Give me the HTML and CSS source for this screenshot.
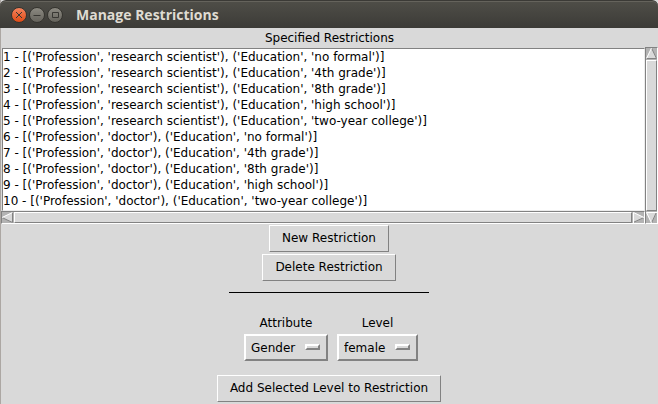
FILE: index.html
```html
<!DOCTYPE html>
<html lang="en">
<head>
<meta charset="utf-8">
<title>Manage Restrictions</title>
<link rel="stylesheet" href="styles.css">
</head>
<body>
<div class="window">
  <header class="titlebar">
    <div class="window-controls">
      <button class="control control-close" type="button" aria-label="Close"><svg viewBox="0 0 16 16"><path d="M5 5l6 6M11 5l-6 6"/></svg></button>
      <button class="control" type="button" aria-label="Minimize"><svg viewBox="0 0 16 16"><path d="M4.500 8.500h7"/></svg></button>
      <button class="control" type="button" aria-label="Maximize"><svg viewBox="0 0 16 16"><path d="M5.500 5.500h6v5h-6z"/></svg></button>
    </div>
    <h1 class="title">Manage Restrictions</h1>
  </header>
  <main class="content">
    <label class="list-label" for="restrictions">Specified Restrictions</label>
    <div class="list-area">
      <div class="list-column">
        <select class="listbox" id="restrictions" size="10">
          <option>1 - [('Profession', 'research scientist'), ('Education', 'no formal')]</option>
          <option>2 - [('Profession', 'research scientist'), ('Education', '4th grade')]</option>
          <option>3 - [('Profession', 'research scientist'), ('Education', '8th grade')]</option>
          <option>4 - [('Profession', 'research scientist'), ('Education', 'high school')]</option>
          <option>5 - [('Profession', 'research scientist'), ('Education', 'two-year college')]</option>
          <option>6 - [('Profession', 'doctor'), ('Education', 'no formal')]</option>
          <option>7 - [('Profession', 'doctor'), ('Education', '4th grade')]</option>
          <option>8 - [('Profession', 'doctor'), ('Education', '8th grade')]</option>
          <option>9 - [('Profession', 'doctor'), ('Education', 'high school')]</option>
          <option>10 - [('Profession', 'doctor'), ('Education', 'two-year college')]</option>
        </select>
        <div class="scrollbar scrollbar-horizontal">
          <button class="arrow" type="button" aria-label="Scroll left"><svg viewBox="0 0 11 11"><path class="face" d="M0 5.5L11 0V11z"/><path class="dark" d="M0 5.5L10.5 10.5V0"/><path class="light" d="M0 5.5L10.5 .5"/></svg></button>
          <div class="thumb"></div>
          <button class="arrow" type="button" aria-label="Scroll right"><svg viewBox="0 0 11 11"><path class="face" d="M11 5.5L0 0V11z"/><path class="dark" d="M0 10.5L11 5.5"/><path class="light" d="M.5 11V.5L11 5.5"/></svg></button>
        </div>
      </div>
      <div class="scrollbar scrollbar-vertical">
        <button class="arrow" type="button" aria-label="Scroll up"><svg viewBox="0 0 11 11"><path class="face" d="M5.5 0L11 11H0z"/><path class="dark" d="M5.5 0L10.5 10.5H0"/><path class="light" d="M.5 10.5L5.5 0"/></svg></button>
        <div class="thumb"></div>
        <button class="arrow" type="button" aria-label="Scroll down"><svg viewBox="0 0 11 11"><path class="face" d="M5.5 11L0 0H11z"/><path class="dark" d="M5.5 11L10.5 0"/><path class="light" d="M11 .5H.5L5.5 11"/></svg></button>
      </div>
    </div>
    <div class="panel">
      <div class="actions">
        <button class="button" type="button">New Restriction</button>
        <button class="button" type="button">Delete Restriction</button>
      </div>
      <hr class="divider">
      <form class="fields">
        <div class="field">
          <label for="attribute">Attribute</label>
          <div class="dropdown"><select id="attribute"><option>Gender</option></select></div>
        </div>
        <div class="field">
          <label for="level">Level</label>
          <div class="dropdown"><select id="level"><option>female</option></select></div>
        </div>
      </form>
      <button class="button" type="button">Add Selected Level to Restriction</button>
    </div>
  </main>
</div>
</body>
</html>
```
FILE: styles.css
```css
*,
*::after {
  box-sizing: border-box;
}

body {
  margin: 0;
  background: #d9d9d9;
  color: #000;
  font: 12px/16px "DejaVu Sans", sans-serif;
}

button,
select {
  margin: 0;
  color: inherit;
  font: inherit;
  border-radius: 0;
}

.window {
  min-height: 100vh;
  border-left: 1px solid #aca7a3;
}

.titlebar {
  display: flex;
  align-items: center;
  gap: 13px;
  height: 28px;
  margin-left: -1px;
  padding-left: 11px;
  background: linear-gradient(#4f4e48, #3c3b37);
  border-top: 1px solid #3b3a36;
  border-radius: 6px 6px 0 0;
  box-shadow: inset 0 1px #65635c;
}

.window-controls {
  display: flex;
  gap: 2px;
}

.control {
  width: 16px;
  height: 16px;
  padding: 0;
  border: 1px solid #35342f;
  border-radius: 50%;
  background: linear-gradient(#8b8981, #65635c);
}

.control-close {
  background: linear-gradient(#f5835d, #df4b16);
}

.control svg {
  display: block;
  margin: -1px;
  width: 16px;
  height: 16px;
  fill: none;
  stroke: #383733;
}

.title {
  margin: 0;
  color: #dfdbd2;
  font: bold 14px/18px "Open Sans", "Noto Sans", sans-serif;
}

.content {
  display: flex;
  flex-direction: column;
  align-items: center;
}

.list-label {
  padding: 2px 0 1px;
}

.list-area {
  display: flex;
  align-self: stretch;
}

.list-column {
  display: flex;
  flex: 1;
  flex-direction: column;
  min-width: 0;
  padding: 1px 0 0 1px;
}

.listbox {
  width: 100%;
  padding: 1px 0 0;
  overflow: hidden;
  appearance: none;
  background: #fff;
  border: 1px solid;
  border-color: #828282 #ececec #ececec #828282;
  outline: 0;
}

.listbox option {
  min-height: 16px;
  padding: 0;
  line-height: 16px;
}

.scrollbar {
  display: flex;
  background: #b3b3b3;
  border: 1px solid;
  border-color: #828282 #fff #fff #828282;
}

.scrollbar-horizontal {
  height: 13px;
  margin-left: -1px;
}

.scrollbar-vertical {
  flex-direction: column;
  width: 13px;
}

.arrow {
  flex: none;
  width: 11px;
  height: 11px;
  padding: 0;
  background: none;
  border: 0;
}

.arrow svg {
  display: block;
  width: 11px;
  height: 11px;
  fill: none;
}

.arrow .face {
  fill: #d9d9d9;
}

.arrow .light {
  stroke: #fff;
}

.arrow .dark {
  stroke: #828282;
}

.thumb {
  flex: 1;
  background: #d9d9d9;
  border: 1px solid;
  border-color: #fff #828282 #828282 #fff;
}

.scrollbar-horizontal .thumb {
  margin: 0 1px;
}

.scrollbar-vertical .thumb {
  margin: 1px 0;
}

.panel {
  display: flex;
  align-self: stretch;
  flex-direction: column;
  align-items: center;
  padding: 1px 1px 0 0;
}

.button {
  padding: 4px 12px 5px;
  line-height: 16px;
  background: #d9d9d9;
  border: 1px solid;
  border-color: #fff #828282 #828282 #fff;
}

.actions {
  display: flex;
  flex-direction: column;
  align-items: center;
  gap: 2px;
}

.divider {
  width: 200px;
  margin: 11px 0 22px;
  border: 0;
  border-top: 1px solid #000;
}

.fields {
  display: flex;
  gap: 9px;
  margin-bottom: 14px;
  padding-left: 4px;
}

.field {
  display: flex;
  flex-direction: column;
  align-items: center;
  gap: 3px;
}

.dropdown {
  position: relative;
}

.dropdown select {
  display: block;
  height: 27px;
  padding: 0 30px 0 5px;
  appearance: none;
  background: #d9d9d9;
  border: 2px solid;
  border-color: #fff #828282 #828282 #fff;
}

.dropdown::after {
  position: absolute;
  top: 10px;
  right: 8px;
  width: 15px;
  height: 6px;
  border: 2px solid;
  border-color: #fff #828282 #828282 #fff;
  background: #d9d9d9;
  content: "";
  pointer-events: none;
}
```
